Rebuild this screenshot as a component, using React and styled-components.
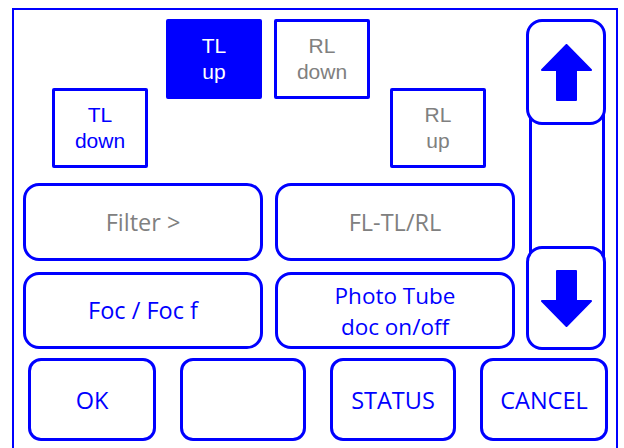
import React from 'react'
import styled, {createGlobalStyle} from 'styled-components'

const BLUE = '#0000ff'
const GREY = '#808080'

const GlobalStyle = createGlobalStyle`
  body {
    margin: 0;
    background: #ffffff;
    overflow: hidden;
  }
`

const Frame = styled.div`
  box-sizing: border-box;
  margin: 8px 0 0 12px;
  width: 606px;
  height: 440px;
  border: 2px solid ${BLUE};
  border-bottom: none;
  padding: 9px 10px 0 9px;
  font-family: 'Open Sans', 'DejaVu Sans', sans-serif;
`

const Main = styled.div`
  display: grid;
  grid-template-columns: 492px 80px;
  column-gap: 11px;
`

const LeftColumn = styled.div`
  display: flex;
  flex-direction: column;
`

const TopArea = styled.div`
  display: flex;
  align-items: flex-start;
  height: 149px;
`

const Toggle = styled.div`
  box-sizing: border-box;
  width: 96px;
  height: 80px;
  margin-left: ${p => p.$gap}px;
  align-self: ${p => (p.$low ? 'flex-end' : 'flex-start')};
  border: 3px solid ${BLUE};
  border-radius: 2px;
  background: ${p => (p.$active ? BLUE : '#ffffff')};
  color: ${p => (p.$active ? '#ffffff' : p.$dim ? GREY : BLUE)};
  display: flex;
  flex-direction: column;
  align-items: center;
  justify-content: center;
  font-family: 'Liberation Sans', Arial, sans-serif;
  font-size: 21px;
  line-height: 26px;
`

const ButtonGrid = styled.div`
  margin-top: 15px;
  display: grid;
  grid-template-columns: 240px 240px;
  grid-template-rows: 78px 77px;
  column-gap: 12px;
  row-gap: 11px;
`

const WideButton = styled.div`
  box-sizing: border-box;
  border: 3px solid ${BLUE};
  border-radius: 16px;
  display: flex;
  flex-direction: column;
  align-items: center;
  justify-content: center;
  text-align: center;
  color: ${p => (p.$dim ? GREY : BLUE)};
  font-size: ${p => (p.$twoLines ? 22.5 : 23.5)}px;
  line-height: 31px;
`

const ScrollColumn = styled.div`
  position: relative;
  height: 331px;
  display: flex;
  flex-direction: column;
  justify-content: space-between;

  &::before {
    content: '';
    position: absolute;
    top: 30px;
    bottom: 30px;
    left: 3px;
    right: 1px;
    border: 3px solid ${BLUE};
  }
`

const ScrollButton = styled.div`
  position: relative;
  z-index: 1;
  box-sizing: border-box;
  height: ${p => p.$h}px;
  border: 3px solid ${BLUE};
  border-radius: 16px;
  background: #ffffff;
  display: flex;
  align-items: center;
  justify-content: center;
`

const BottomRow = styled.div`
  margin-top: 8px;
  padding-left: 5px;
  display: grid;
  grid-template-columns: 128px 126px 126px 128px;
  column-gap: 24px;
`

const BottomButton = styled.div`
  box-sizing: border-box;
  height: 83px;
  border: 3px solid ${BLUE};
  border-radius: 13px;
  display: flex;
  align-items: center;
  justify-content: center;
  color: ${BLUE};
  font-size: 23.5px;
`

const Arrow = ({down}) => (
  <svg
    width="51"
    height="57"
    viewBox="0 0 51 57"
    style={down ? {transform: 'rotate(180deg)'} : undefined}
  >
    <path
      d="M25.5 1 L50 26 L35 26 L35 56 L16 56 L16 26 L1 26 Z"
      fill={BLUE}
      stroke={BLUE}
      strokeWidth="2"
      strokeLinejoin="round"
    />
  </svg>
)

export default function App() {
  return (
    <>
      <GlobalStyle />
      <Frame>
        <Main>
          <LeftColumn>
            <TopArea>
              <Toggle $gap={29} $low>
                <span>TL</span>
                <span>down</span>
              </Toggle>
              <Toggle $gap={18} $active>
                <span>TL</span>
                <span>up</span>
              </Toggle>
              <Toggle $gap={12} $dim>
                <span>RL</span>
                <span>down</span>
              </Toggle>
              <Toggle $gap={20} $low $dim>
                <span>RL</span>
                <span>up</span>
              </Toggle>
            </TopArea>
            <ButtonGrid>
              <WideButton $dim>Filter &gt;</WideButton>
              <WideButton $dim>FL-TL/RL</WideButton>
              <WideButton>Foc / Foc f</WideButton>
              <WideButton $twoLines>
                <span>Photo Tube</span>
                <span>doc on/off</span>
              </WideButton>
            </ButtonGrid>
          </LeftColumn>
          <ScrollColumn>
            <ScrollButton $h={106}>
              <Arrow />
            </ScrollButton>
            <ScrollButton $h={104}>
              <Arrow down />
            </ScrollButton>
          </ScrollColumn>
        </Main>
        <BottomRow>
          <BottomButton>OK</BottomButton>
          <BottomButton />
          <BottomButton>STATUS</BottomButton>
          <BottomButton>CANCEL</BottomButton>
        </BottomRow>
      </Frame>
    </>
  )
}
